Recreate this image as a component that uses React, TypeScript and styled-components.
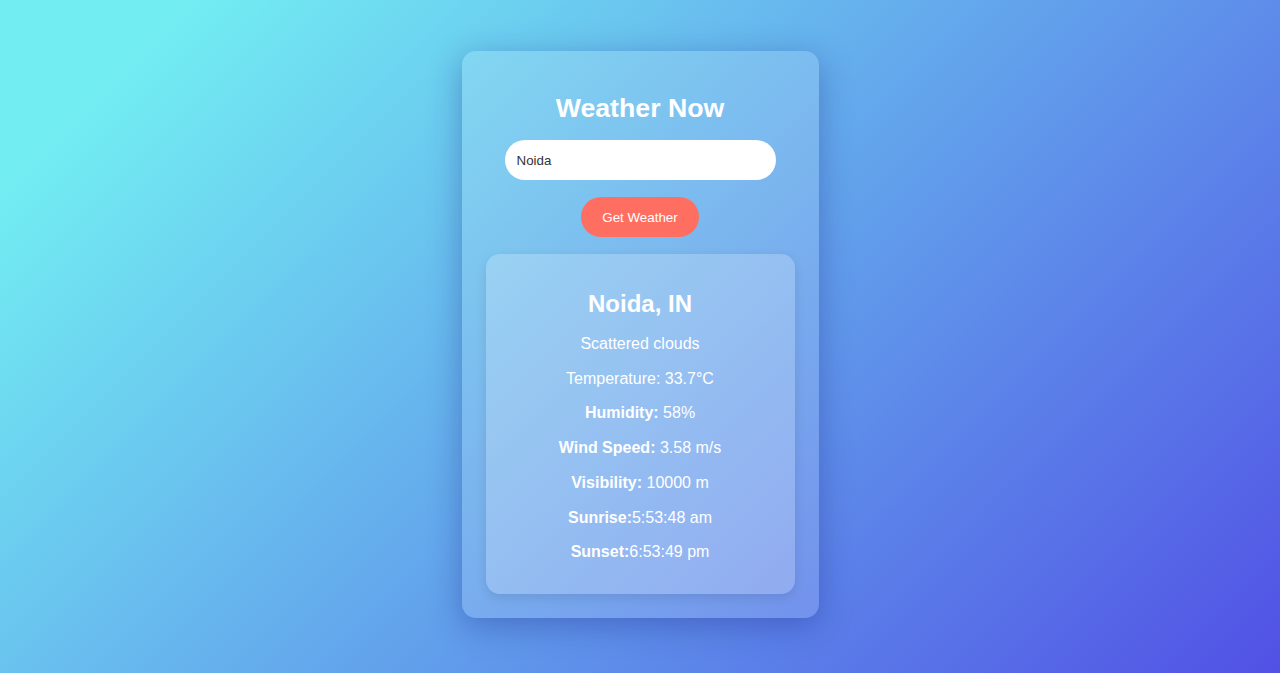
import styled, { createGlobalStyle } from "styled-components";

const GlobalStyle = createGlobalStyle`
    * {
        box-sizing: border-box;
    }

    body {
        margin: 0;
        min-height: 100vh;
        font-family: "Liberation Sans", Arial, sans-serif;
        background: linear-gradient(135deg, #72edf2 10%, #5151e5 100%);
        background-attachment: fixed;
    }
`;

const Page = styled.div`
    min-height: 100vh;
    display: flex;
    justify-content: center;
    align-items: flex-start;
    padding-top: 51px;
`;

const Card = styled.div`
    width: 357px;
    padding: 24px;
    border-radius: 14px;
    background: rgba(255, 255, 255, 0.15);
    box-shadow: 0 8px 32px rgba(31, 38, 135, 0.37);
    display: flex;
    flex-direction: column;
    align-items: center;
    color: #fff;
`;

const Title = styled.h1`
    font-size: 26.7px;
    font-weight: 700;
    margin: 18px 0 16px;
    color: #fff;
`;

const SearchInput = styled.input`
    width: 271px;
    height: 40px;
    padding: 0 12px;
    border: none;
    border-radius: 20px;
    outline: none;
    background: #fff;
    color: #333;
    font-family: inherit;
    font-size: 13.33px;
`;

const GetButton = styled.button`
    margin-top: 17px;
    height: 40px;
    padding: 0 21px;
    border: none;
    border-radius: 20px;
    background: #ff6f61;
    color: #fff;
    font-family: inherit;
    font-size: 13.33px;
    cursor: pointer;
`;

const Result = styled.div`
    margin-top: 17px;
    width: 100%;
    padding: 20px 20px 16px;
    border-radius: 14px;
    background: rgba(255, 255, 255, 0.21);
    box-shadow: 0 4px 12px rgba(0, 0, 0, 0.1);
    text-align: center;
`;

const City = styled.h2`
    font-size: 24px;
    font-weight: 700;
    margin: 16px 0 17px;
`;

const Line = styled.p`
    font-size: 16px;
    line-height: 1.17;
    margin: 16px 0;
`;

const details = [
    { label: "Humidity:", value: " 58%" },
    { label: "Wind Speed:", value: " 3.58 m/s" },
    { label: "Visibility:", value: " 10000 m" },
    { label: "Sunrise:", value: "5:53:48 am" },
    { label: "Sunset:", value: "6:53:49 pm" },
];

export default function App() {
    return (
        <>
            <GlobalStyle />
            <Page>
                <Card>
                    <Title>Weather Now</Title>
                    <SearchInput type="text" defaultValue="Noida" placeholder="Enter city" />
                    <GetButton>Get Weather</GetButton>
                    <Result>
                        <City>Noida, IN</City>
                        <Line>Scattered clouds</Line>
                        <Line>Temperature: 33.7°C</Line>
                        {details.map((d) => (
                            <Line key={d.label}>
                                <strong>{d.label}</strong>
                                {d.value}
                            </Line>
                        ))}
                    </Result>
                </Card>
            </Page>
        </>
    );
}
